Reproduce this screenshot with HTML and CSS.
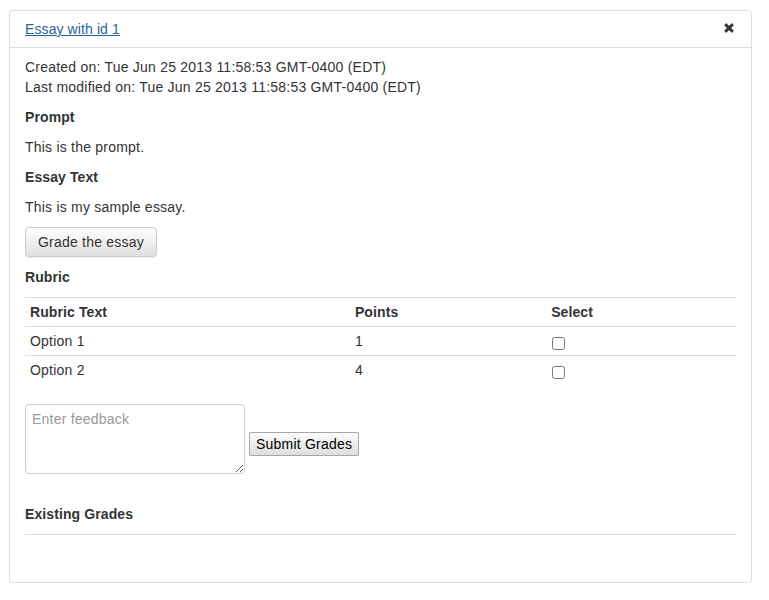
FILE: index.html
```html
<!DOCTYPE html>
<html>
<head>
<meta charset="utf-8">
<link rel="stylesheet" href="styles.css">
</head>
<body>
<div class="panel">
  <div class="panel-heading">
    <a class="panel-title" href="#">Essay with id 1</a>
    <span class="close" aria-label="close">
      <svg width="12" height="12" viewBox="0 0 12 12"><path d="M1.5 3.2 L3.2 1.5 L6 4.3 L8.8 1.5 L10.5 3.2 L7.7 6 L10.5 8.8 L8.8 10.5 L6 7.7 L3.2 10.5 L1.5 8.8 L4.3 6 Z" fill="#333" stroke="#333" stroke-width="0.8" stroke-linejoin="round"/></svg>
    </span>
  </div>
  <div class="panel-body">
    <div class="meta">
      <div>Created on: Tue Jun 25 2013 11:58:53 GMT-0400 (EDT)</div>
      <div>Last modified on: Tue Jun 25 2013 11:58:53 GMT-0400 (EDT)</div>
    </div>
    <h5>Prompt</h5>
    <p>This is the prompt.</p>
    <h5>Essay Text</h5>
    <p>This is my sample essay.</p>
    <button class="btn">Grade the essay</button>
    <h5>Rubric</h5>
    <table class="table">
      <thead>
        <tr><th class="c1">Rubric Text</th><th class="c2">Points</th><th class="c3">Select</th></tr>
      </thead>
      <tbody>
        <tr><td>Option 1</td><td>1</td><td><input type="checkbox" class="chk"></td></tr>
        <tr><td>Option 2</td><td>4</td><td><input type="checkbox" class="chk"></td></tr>
      </tbody>
    </table>
    <div class="grade-form">
      <textarea class="feedback" placeholder="Enter feedback"></textarea>
      <button class="submit">Submit Grades</button>
    </div>
    <h5>Existing Grades</h5>
    <hr>
  </div>
</div>
</body>
</html>
```

FILE: styles.css
```css
html, body {
  margin: 0;
  padding: 0;
  background: #fff;
}
body {
  padding: 10px 17px 0 9px;
  font-family: "Liberation Sans", Arial, Helvetica, sans-serif;
  font-size: 14px;
  line-height: 20px;
  letter-spacing: 0.22px;
  color: #333;
}
.panel {
  border: 1px solid #ddd;
  border-radius: 4px;
  box-shadow: 0 1px 1px rgba(0,0,0,0.05);
  background: #fff;
}
.panel-heading {
  display: flex;
  justify-content: space-between;
  align-items: center;
  padding: 10px 15px;
  height: 16px;
  border-bottom: 1px solid #ddd;
}
.panel-title {
  color: #2a6496;
  text-decoration: underline;
  font-size: 14px;
  line-height: 16px;
  letter-spacing: 0.1px;
  margin-top: 0;
}
.close {
  display: flex;
  margin-right: 1px;
  margin-top: -2px;
}
.panel-body {
  padding: 9px 15px 27px;
}
.meta {
  line-height: 20px;
}
h5 {
  font-size: 14px;
  font-weight: bold;
  line-height: 20px;
  margin: 10px 0;
  letter-spacing: 0.1px;
}
p {
  margin: 0 0 10px;
}
.btn {
  font-family: inherit;
  font-size: 14px;
  line-height: 20px;
  letter-spacing: 0.22px;
  color: #333;
  padding: 4px 12px;
  border: 1px solid #ccc;
  border-radius: 4px;
  background: linear-gradient(to bottom, #fff 0%, #e0e0e0 100%);
  box-shadow: inset 0 1px 0 rgba(255,255,255,0.15), 0 1px 1px rgba(0,0,0,0.075);
  display: block;
  margin: 0;
}
.table {
  width: 100%;
  border-collapse: collapse;
  margin-bottom: 20px;
}
.table th, .table td {
  text-align: left;
  padding: 4px 5px;
  line-height: 20px;
  border-top: 1px solid #ddd;
  vertical-align: top;
}
.table th {
  letter-spacing: 0.1px;
}
.c1 { width: 45.7%; }
.c2 { width: 27.6%; }
.c3 { width: 26.7%; }
.chk {
  margin: 6px 0 0 1px;
  width: 13px;
  height: 13px;
  vertical-align: top;
}
.grade-form {
  display: flex;
  align-items: flex-start;
  gap: 4px;
  margin-bottom: 30px;
}
.feedback {
  width: 220px;
  height: 70px;
  box-sizing: border-box;
  border: 1px solid #ccc;
  border-radius: 4px;
  padding: 4px 6px;
  font-family: inherit;
  font-size: 14px;
  line-height: 20px;
  letter-spacing: 0.22px;
  color: #555;
  margin: 0;
  resize: both;
}
.feedback::placeholder {
  color: #999;
}
.submit {
  margin-top: 28px;
  height: 24px;
  padding: 0 6px;
  font-family: inherit;
  font-size: 14px;
  letter-spacing: 0.22px;
  color: #000;
  border: 1px solid #a6a6a6;
  border-radius: 2px;
  background: linear-gradient(to bottom, #fbfbfb 0%, #dedede 100%);
}
hr {
  border: 0;
  border-top: 1px solid #ddd;
  margin: 10px 0 20px;
  height: 0;
}
```
